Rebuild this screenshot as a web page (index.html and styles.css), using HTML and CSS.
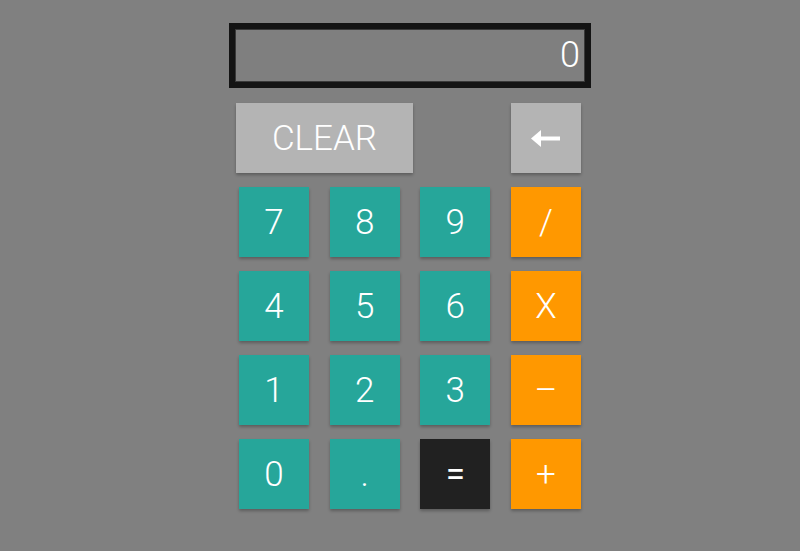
FILE: index.html
```html
<!DOCTYPE html>
<html>
<head>
<meta charset="utf-8">
<link rel="stylesheet" href="styles.css">
</head>
<body>
<div class="calc">
  <div class="display">0</div>
  <div class="top-row">
    <button class="btn gray clear">CLEAR</button>
    <button class="btn gray back" aria-label="backspace">
      <svg class="arrow" width="29" height="17" viewBox="0 0 29 17"><path d="M29 8.5H8" stroke="#fff" stroke-width="4" fill="none"/><path d="M0 8.5L10 0V17Z" fill="#fff"/></svg>
    </button>
  </div>
  <div class="keys">
    <button class="btn teal">7</button>
    <button class="btn teal">8</button>
    <button class="btn teal">9</button>
    <button class="btn orange">/</button>
    <button class="btn teal">4</button>
    <button class="btn teal">5</button>
    <button class="btn teal">6</button>
    <button class="btn orange">X</button>
    <button class="btn teal">1</button>
    <button class="btn teal">2</button>
    <button class="btn teal">3</button>
    <button class="btn orange">&ndash;</button>
    <button class="btn teal">0</button>
    <button class="btn teal dot">.</button>
    <button class="btn black">=</button>
    <button class="btn orange">+</button>
  </div>
</div>
</body>
</html>
```
FILE: styles.css
```css
html, body {
  margin: 0;
  background: #808080;
  height: 100%;
}
body {
  font-family: Roboto, "Liberation Sans", sans-serif;
}
.calc {
  width: 362px;
  margin: 23px 0 0 229px;
}
.display {
  box-sizing: border-box;
  height: 65px;
  border: 6px solid #141414;
  box-shadow: inset 0 0 0 1px #3a3a3a;
  background: #7f7f7f;
  color: #fff;
  font-weight: 300;
  font-size: 36px;
  line-height: 53px;
  text-align: right;
  padding-right: 5px;
}
.top-row {
  display: flex;
  justify-content: space-between;
  margin: 15px 10px 0 7px;
}
.btn {
  border: none;
  margin: 0;
  padding: 0;
  width: 70px;
  height: 70px;
  color: #fff;
  font-family: Roboto, "Liberation Sans", sans-serif;
  font-weight: 300;
  font-size: 35px;
  box-shadow: 0 2px 3px rgba(0, 0, 0, 0.28);
  display: flex;
  align-items: center;
  justify-content: center;
}
.arrow { margin-right: 1px; margin-top: 1px; }
.gray { background: #b4b4b4; }
.clear { width: 177px; }
.teal { background: #26a69a; }
.orange { background: #ff9800; }
.black { background: #212121; font-weight: 400; }
.keys {
  display: grid;
  grid-template-columns: repeat(4, 70px);
  column-gap: 20.67px;
  row-gap: 14px;
  margin: 14px 10px 0 10px;
}
```
